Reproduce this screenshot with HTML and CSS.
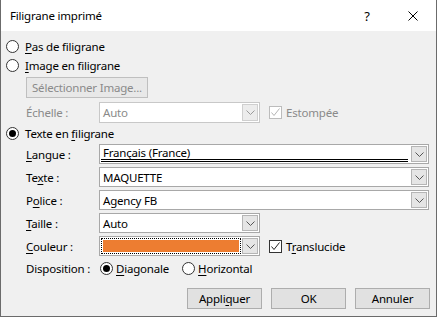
FILE: index.html
```html
<!DOCTYPE html>
<html lang="fr">
<head>
  <meta charset="UTF-8">
  <meta name="viewport" content="width=device-width, initial-scale=1.0">
  <title>Filigrane imprimé</title>
  <link rel="stylesheet" href="styles.css">
</head>
<body>
  <div class="dialog">
    <div class="titlebar">
      <span class="title">Filigrane imprimé</span>
      <div class="caption-buttons">
        <span class="cap-btn">?</span>
        <span class="cap-btn">
          <svg width="10" height="10" viewBox="0 0 10 10"><path d="M0.5 0.5 L9.5 9.5 M9.5 0.5 L0.5 9.5" stroke="#000" stroke-width="1" fill="none"/></svg>
        </span>
      </div>
    </div>

    <div class="content">
      <div class="radio-row">
        <span class="radio"></span>
        <span><u>P</u>as de filigrane</span>
      </div>
      <div class="radio-row">
        <span class="radio"></span>
        <span><u>I</u>mage en filigrane</span>
      </div>

      <div class="indent">
        <span class="btn btn-disabled">Sélectionner Image...</span>
      </div>

      <div class="field-row row-echelle">
        <span class="label label-disabled">Échelle :</span>
        <div class="combo combo-short combo-disabled">
          <span class="combo-text">Auto</span>
          <span class="arrow"><svg width="9" height="5" viewBox="0 0 9 5"><polyline points="0.5,0.5 4.5,4.5 8.5,0.5" fill="none" stroke="#9a9a9a"/></svg></span>
        </div>
        <div class="check check-disabled">
          <span class="box"><svg width="11" height="11" viewBox="0 0 11 11"><polyline points="1.5,5.5 4,8.5 9.5,1.5" fill="none" stroke="#b5b5b5" stroke-width="1"/></svg></span>
          <span>Estompée</span>
        </div>
      </div>

      <div class="radio-row row-texte">
        <span class="radio checked"></span>
        <span>Texte en <u>f</u>iligrane</span>
      </div>

      <div class="field-row first">
        <span class="label"><u>L</u>angue :</span>
        <div class="combo combo-long">
          <span class="combo-text lang">Français (France)</span>
          <span class="arrow"><svg width="9" height="5" viewBox="0 0 9 5"><polyline points="0.5,0.5 4.5,4.5 8.5,0.5" fill="none" stroke="#555"/></svg></span>
        </div>
      </div>

      <div class="field-row">
        <span class="label">Te<u>x</u>te :</span>
        <div class="combo combo-long">
          <span class="combo-text">MAQUETTE</span>
          <span class="arrow"><svg width="9" height="5" viewBox="0 0 9 5"><polyline points="0.5,0.5 4.5,4.5 8.5,0.5" fill="none" stroke="#555"/></svg></span>
        </div>
      </div>

      <div class="field-row">
        <span class="label">P<u>o</u>lice :</span>
        <div class="combo combo-long">
          <span class="combo-text">Agency FB</span>
          <span class="arrow"><svg width="9" height="5" viewBox="0 0 9 5"><polyline points="0.5,0.5 4.5,4.5 8.5,0.5" fill="none" stroke="#555"/></svg></span>
        </div>
      </div>

      <div class="field-row">
        <span class="label"><u>T</u>aille :</span>
        <div class="combo combo-short">
          <span class="combo-text">Auto</span>
          <span class="arrow"><svg width="9" height="5" viewBox="0 0 9 5"><polyline points="0.5,0.5 4.5,4.5 8.5,0.5" fill="none" stroke="#555"/></svg></span>
        </div>
      </div>

      <div class="field-row">
        <span class="label"><u>C</u>ouleur :</span>
        <div class="combo combo-short">
          <span class="combo-text swatch-wrap"><span class="swatch"></span></span>
          <span class="arrow"><svg width="9" height="5" viewBox="0 0 9 5"><polyline points="0.5,0.5 4.5,4.5 8.5,0.5" fill="none" stroke="#555"/></svg></span>
        </div>
        <div class="check">
          <span class="box"><svg width="11" height="11" viewBox="0 0 11 11"><polyline points="1.5,5.5 4,8.5 9.5,1.5" fill="none" stroke="#222" stroke-width="1"/></svg></span>
          <span>T<u>r</u>anslucide</span>
        </div>
      </div>

      <div class="field-row disposition">
        <span class="label">Disposition :</span>
        <div class="radio-row inline">
          <span class="radio checked"></span>
          <span><u>D</u>iagonale</span>
        </div>
        <div class="radio-row inline">
          <span class="radio"></span>
          <span><u>H</u>orizontal</span>
        </div>
      </div>

      <div class="actions">
        <span class="btn">Appli<u>q</u>uer</span>
        <span class="btn">OK</span>
        <span class="btn">Annuler</span>
      </div>
    </div>
  </div>
</body>
</html>
```

FILE: styles.css
```css
body {
  margin: 0;
  font-family: "Noto Sans", "Open Sans", sans-serif;
  font-size: 11.5px;
  letter-spacing: -0.2px;
  color: #000;
  background: #f0f0f0;
}
u {
  text-decoration-thickness: 1px;
  text-underline-offset: 2px;
}
.dialog {
  width: 437px;
  height: 317px;
  box-sizing: border-box;
  border: 1px solid #6b6b6b;
  border-top: none;
  display: flex;
  flex-direction: column;
  background: #f0f0f0;
}
.titlebar {
  height: 31px;
  background: #fff;
  display: flex;
  align-items: center;
  justify-content: space-between;
  flex-shrink: 0;
}
.title {
  padding-left: 9px;
}
.caption-buttons {
  display: flex;
}
.cap-btn {
  width: 46px;
  height: 31px;
  display: flex;
  align-items: center;
  justify-content: center;
  font-size: 13px;
}
.content {
  flex: 1;
  display: flex;
  flex-direction: column;
  padding: 6px 6px 0 5px;
}
.radio-row {
  height: 19px;
  display: flex;
  align-items: center;
  gap: 6px;
}
.radio {
  width: 13px;
  height: 13px;
  box-sizing: border-box;
  border: 1px solid #333;
  border-radius: 50%;
  background: #fff;
  display: flex;
  align-items: center;
  justify-content: center;
}
.radio.checked::after {
  content: "";
  width: 7px;
  height: 7px;
  border-radius: 50%;
  background: #000;
}
.indent {
  padding-left: 20px;
  margin-top: 2px;
  display: flex;
}
.btn {
  width: 75px;
  height: 21px;
  box-sizing: border-box;
  border: 1px solid #adadad;
  background: #e1e1e1;
  display: flex;
  align-items: center;
  justify-content: center;
}
.btn-disabled {
  width: 122px;
  border-color: #bfbfbf;
  background: #e8e8e8;
  color: #8a8a8a;
}
.field-row {
  height: 20px;
  margin-top: 3px;
  padding-left: 20px;
  display: flex;
  align-items: center;
}
.field-row.first {
  margin-top: 1px;
}
.row-echelle {
  height: 21px;
  margin-top: 4px;
}
.row-texte {
  height: 20px;
}
.label {
  width: 73px;
  flex-shrink: 0;
}
.label-disabled {
  color: #8a8a8a;
}
.combo {
  height: 100%;
  box-sizing: border-box;
  border: 1px solid #a8a8a8;
  background: #fff;
  display: flex;
}
.combo-long {
  width: 330px;
}
.combo-short {
  width: 161px;
}
.combo-text {
  flex: 1;
  padding-left: 3px;
  display: flex;
  align-items: center;
}
.combo-text.lang {
  margin: 0 2px 1px 1px;
  padding-left: 2px;
  border-bottom: 3px double #000;
}
.arrow {
  width: 16px;
  box-sizing: border-box;
  margin: 1px;
  border: 1px solid #b5b5b5;
  background: #e5e5e5;
  display: flex;
  align-items: center;
  justify-content: center;
}
.combo-disabled {
  border-color: #c8c8c8;
}
.combo-disabled .combo-text {
  color: #8a8a8a;
}
.combo-disabled .arrow {
  border-color: #cfcfcf;
  background: #ececec;
}
.swatch-wrap {
  margin: 1px 0 1px 1px;
  padding: 1px;
  border: 1px dotted #000;
}
.swatch {
  flex: 1;
  height: 100%;
  background: #ed7d31;
}
.check {
  margin-left: 9px;
  display: flex;
  align-items: center;
  gap: 4px;
}
.box {
  width: 13px;
  height: 13px;
  box-sizing: border-box;
  border: 1px solid #333;
  background: #fff;
  display: flex;
  align-items: center;
  justify-content: center;
}
.check-disabled {
  color: #8a8a8a;
}
.check-disabled .box {
  border-color: #bcbcbc;
}
.disposition {
  height: 19px;
}
.disposition .label {
  width: 74px;
}
.radio-row.inline {
  gap: 3px;
  margin-right: 13px;
}
.actions {
  margin-top: 10px;
  display: flex;
  justify-content: flex-end;
  gap: 9px;
}
```
